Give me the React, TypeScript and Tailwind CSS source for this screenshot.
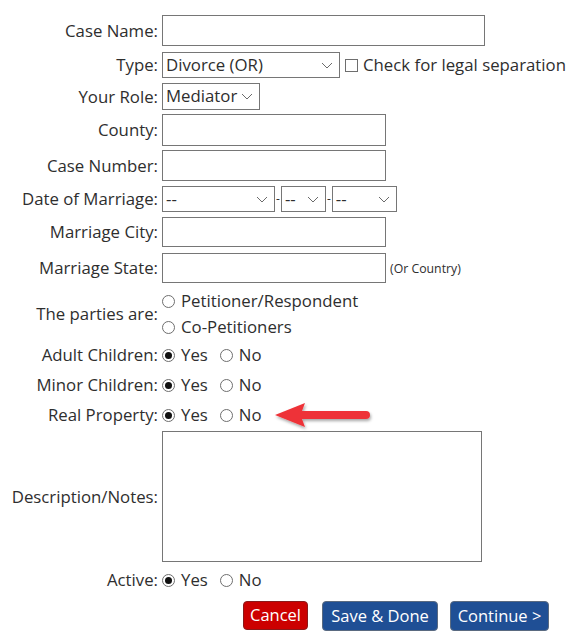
import React from 'react';

const font = { fontFamily: '"Open Sans", "Liberation Sans", sans-serif' };

const Chevron: React.FC = () => (
  <svg width="12" height="7" viewBox="0 0 12 7" className="shrink-0">
    <path d="M1 1l5 5 5-5" fill="none" stroke="#6b6b6b" strokeWidth="1" />
  </svg>
);

const Select: React.FC<{ value: string; w: string }> = ({ value, w }) => (
  <div className={`flex h-full items-center justify-between border border-[#767676] bg-white pl-[3px] pr-[6px] ${w}`}>
    <span className="leading-none">{value}</span>
    <Chevron />
  </div>
);

const Radio: React.FC<{ checked?: boolean; label: string }> = ({ checked, label }) => (
  <span className="flex items-center">
    <span className="flex h-[13px] w-[13px] items-center justify-center rounded-full border border-[#6e6e6e] bg-white">
      {checked && <span className="h-[7px] w-[7px] rounded-full bg-[#111]" />}
    </span>
    <span className="ml-[6px]">{label}</span>
  </span>
);

const YesNo: React.FC = () => (
  <div className="flex items-center">
    <Radio checked label="Yes" />
    <span className="ml-[12px]">
      <Radio label="No" />
    </span>
  </div>
);

const Row: React.FC<{ label: string; h: string; mt: string; children: React.ReactNode }> = ({ label, h, mt, children }) => (
  <div className={`flex items-center ${h} ${mt}`}>
    <div className="w-[158px] shrink-0 whitespace-nowrap text-right">{label}</div>
    <div className="ml-[4px] flex h-full items-center whitespace-nowrap">{children}</div>
  </div>
);

export default function App() {
  return (
    <div className="relative h-[642px] w-[570px] bg-white text-[16.8px] text-[#2e2e2e]" style={font}>
      <div className="pt-[15px]">
        <Row label="Case Name:" h="h-[31px]" mt="mt-0">
          <div className="h-full w-[323px] border border-[#767676]" />
        </Row>
        <Row label="Type:" h="h-[26px]" mt="mt-[6px]">
          <Select value="Divorce (OR)" w="w-[178px]" />
          <span className="ml-[5px] h-[13px] w-[13px] border border-[#6e6e6e]" />
          <span className="ml-[5px]">Check for legal separation</span>
        </Row>
        <Row label="Your Role:" h="h-[27px]" mt="mt-[5px]">
          <Select value="Mediator" w="w-[98px]" />
        </Row>
        <Row label="County:" h="h-[32px]" mt="mt-[4px]">
          <div className="h-full w-[224px] border border-[#767676]" />
        </Row>
        <Row label="Case Number:" h="h-[31px]" mt="mt-[4px]">
          <div className="h-full w-[224px] border border-[#767676]" />
        </Row>
        <Row label="Date of Marriage:" h="h-[26px]" mt="mt-[5px]">
          <Select value="--" w="w-[113px]" />
          <span className="mx-[1px] text-[12px]">-</span>
          <Select value="--" w="w-[45px]" />
          <span className="mx-[1px] text-[12px]">-</span>
          <Select value="--" w="w-[65px]" />
        </Row>
        <Row label="Marriage City:" h="h-[30px]" mt="mt-[5px]">
          <div className="h-full w-[224px] border border-[#767676]" />
        </Row>
        <Row label="Marriage State:" h="h-[30px]" mt="mt-[6px]">
          <div className="h-full w-[224px] border border-[#767676]" />
          <span className="ml-[4px] mt-[3px] text-[12.3px]">(Or Country)</span>
        </Row>
        <Row label="The parties are:" h="h-[52px]" mt="mt-[5px]">
          <div className="flex flex-col">
            <div className="flex h-[26px] items-center">
              <Radio label="Petitioner/Respondent" />
            </div>
            <div className="flex h-[26px] items-center">
              <Radio label="Co-Petitioners" />
            </div>
          </div>
        </Row>
        <Row label="Adult Children:" h="h-[24px]" mt="mt-[3px]">
          <YesNo />
        </Row>
        <Row label="Minor Children:" h="h-[24px]" mt="mt-[6px]">
          <YesNo />
        </Row>
        <Row label="Real Property:" h="h-[24px]" mt="mt-[6px]">
          <YesNo />
        </Row>
        <Row label="Description/Notes:" h="h-[131px]" mt="mt-[4px]">
          <div className="h-full w-[320px] border border-[#767676]" />
        </Row>
        <Row label="Active:" h="h-[24px]" mt="mt-[6px]">
          <YesNo />
        </Row>
        <div className="mt-[9px] flex pl-[243px]">
          <button className="h-[29px] w-[65px] rounded-[4px] border border-[#8a1a1a] bg-[#cc0000] text-center text-[16.5px] leading-none text-white">
            Cancel
          </button>
          <button className="ml-[14px] h-[30px] w-[116px] rounded-[4px] border border-[#5a6a80] bg-[#1f4f95] text-center text-[16.5px] leading-none text-white">
            Save &amp; Done
          </button>
          <button className="ml-[12px] h-[30px] w-[99px] rounded-[4px] border border-[#5a6a80] bg-[#1f4f95] text-center text-[16.5px] leading-none text-white">
            Continue &gt;
          </button>
        </div>
      </div>

      {/* annotation arrow */}
      <svg className="absolute left-[272px] top-[400px]" width="104" height="32" viewBox="0 0 104 32">
        <defs>
          <filter id="sh" x="-10%" y="-30%" width="130%" height="170%">
            <feDropShadow dx="1" dy="2" stdDeviation="1.5" floodColor="#000" floodOpacity="0.35" />
          </filter>
        </defs>
        <g filter="url(#sh)">
          <path d="M3 15 L33 3 L30 11 L94 11 A4 4 0 0 1 94 19 L30 19 L33 27 Z" fill="#ee3338" />
        </g>
      </svg>
    </div>
  );
}
